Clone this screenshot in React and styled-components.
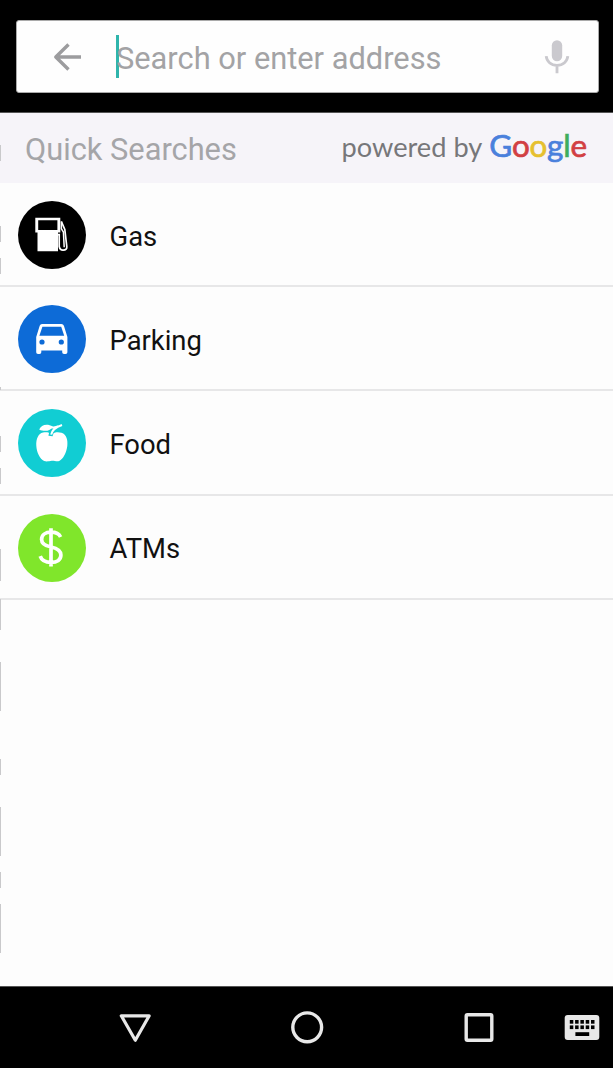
import React from 'react';
import styled, { createGlobalStyle } from 'styled-components';

const GlobalStyle = createGlobalStyle`
  * { box-sizing: border-box; }
  body { margin: 0; background: #fdfdfd; font-family: Roboto, sans-serif; }
`;

const Screen = styled.div`
  position: relative;
  display: flex;
  flex-direction: column;
  width: 613px;
  height: 1068px;
  overflow: hidden;
  background: #fdfdfd;
`;

const TopBar = styled.header`
  flex: none;
  height: 113px;
  padding: 20px 14px 0 16px;
  background: #000;
  border-bottom: 1px solid #555;
`;

const SearchBox = styled.div`
  display: flex;
  align-items: center;
  height: 73px;
  padding: 0 21px 0 30px;
  background: #fefefe;
  border: 1px solid #aaa;
  border-radius: 3px;
`;

const Caret = styled.span`
  flex: none;
  width: 3px;
  height: 43px;
  margin-left: 29px;
  background: #2fb5ac;
`;

const Placeholder = styled.span`
  flex: 1;
  margin-left: -3px;
  padding-top: 4px;
  font-size: 30.8px;
  line-height: 36px;
  color: #a3a3a5;
  white-space: nowrap;
`;

const SectionHeader = styled.div`
  display: flex;
  flex: none;
  align-items: center;
  justify-content: space-between;
  height: 70px;
  padding: 0 26px 0 25px;
  background: #f6f4f9;
`;

const SectionTitle = styled.h1`
  margin: 0;
  padding-top: 4px;
  font-size: 30.8px;
  font-weight: 400;
  line-height: 36px;
  color: #a5a5a8;
`;

const Attribution = styled.div`
  display: flex;
  align-items: baseline;
  gap: 7px;
  padding-bottom: 4px;
  font-family: Lato, sans-serif;
  font-size: 27.2px;
  line-height: 32px;
  color: #77777a;
`;

const Brand = styled.span`
  font-size: 31.4px;
  letter-spacing: -0.15px;
  -webkit-text-stroke: 0.7px;
`;

const Letter = styled.span`
  color: ${(p) => p.$color};
`;

const List = styled.ul`
  flex: 1;
  margin: 0;
  padding: 0;
  list-style: none;
`;

const Row = styled.li`
  display: flex;
  align-items: center;
  height: 104.2px;
  padding: 2px 0 0 18px;
  border-bottom: 2px solid #e7e7e8;
`;

const Badge = styled.span`
  display: flex;
  width: 68px;
  height: 68px;
  border-radius: 50%;
  background: ${(p) => p.$color};
`;

const RowLabel = styled.span`
  margin-left: 23.5px;
  padding-top: 3px;
  font-size: 27.4px;
  line-height: 34px;
  color: #111;
`;

const NavBar = styled.nav`
  display: flex;
  flex: none;
  align-items: center;
  height: 82px;
  padding: 0 0 2px 117px;
  background: #000;
  border-top: 1px solid #555;
`;

const NavIcon = styled.svg`
  flex: none;
  width: 36px;
  height: 36px;
  margin-right: ${(p) => p.$gap || 0}px;
`;

const EdgeTick = styled.i`
  position: absolute;
  left: 0;
  top: ${(p) => p.$top}px;
  width: 1px;
  height: ${(p) => p.$length}px;
  background: #c9c9cb;
`;

const ticks = [
  [145, 16], [226, 16], [258, 16], [387, 3], [436, 16], [468, 16],
  [549, 32], [599, 31], [662, 49], [759, 16], [807, 49], [872, 16], [904, 49],
];

const brandLetters = [
  ['G', '#4a80dc'], ['o', '#d23f43'], ['o', '#e6c02f'],
  ['g', '#4a80dc'], ['l', '#3fae5c'], ['e', '#d23f43'],
];

const BackIcon = () => (
  <svg width="40" height="40" viewBox="0 0 40 40" fill="none" stroke="#9c9c9e" strokeWidth="3.4">
    <path d="M34 20H8.5M21.5 7.5 8.8 20 21.5 32.5" strokeLinejoin="round" />
  </svg>
);

const MicIcon = () => (
  <svg width="40" height="40" viewBox="0 0 40 40" fill="none">
    <rect x="14.8" y="3.3" width="10.4" height="21" rx="5.2" fill="#cac9ce" />
    <path d="M9.2 19.2C9.6 24.3 14 28.4 20 28.4S30.4 24.3 30.8 19.2M20 28.4V36.3" stroke="#cac9ce" strokeWidth="2.8" />
  </svg>
);

const GasIcon = () => (
  <svg width="68" height="68" viewBox="0 0 68 68" fill="none">
    <path fill="#fff" fillRule="evenodd" d="M17.3 16.8H42.3V31.6H40V50.3H19.5V31.6H17.3ZM20.2 19.2V29H39.4V19.2Z" />
    <path d="M39.5 33.6H41.2V45.5Q42 49.4 45.2 49.2Q49.2 49 48.8 45.5L46.8 28.5 43.4 20.5" stroke="#fff" strokeWidth="1.7" />
    <path d="M43.4 20.5V27.8L45.4 31 46.2 46.2" stroke="#fff" strokeWidth="1.5" />
  </svg>
);

const CarIcon = () => (
  <svg width="68" height="68" viewBox="0 0 68 68">
    <path fill="#fff" fillRule="evenodd" d="M24 19H43.5Q45.2 19 45.9 20.7L49.4 32V47.2Q49.4 49 47.6 49H46Q44.2 49 44.2 47.2V45.4H23.3V47.2Q23.3 49 21.5 49H20Q18.2 49 18.2 47.2V32L21.7 20.7Q22.3 19 24 19ZM24.4 21.8 21.4 30.7H46.2L43.2 21.8ZM24 34.4A2.6 2.6 0 1 0 24 39.6A2.6 2.6 0 1 0 24 34.4ZM43.3 34.4A2.6 2.6 0 1 0 43.3 39.6A2.6 2.6 0 1 0 43.3 34.4Z" />
  </svg>
);

const AppleIcon = () => (
  <svg width="68" height="68" viewBox="0 0 68 68" fill="#fff">
    <path d="M33.8 25C36.5 23.2 40 22.6 43.5 23.8C48.7 25.6 50 31.5 49.3 37C48.4 43.8 45.2 50.2 41.2 52C38.8 53 36.6 51.6 33.8 51.8C31 52 29 53.1 26.2 52C21.8 50 18.7 43.4 18.3 36.8C18 29.8 20.3 24.8 25 23.6C28.2 22.8 31.3 23.5 33.8 25Z" />
    <path d="M32.5 27C33 22 37 18.2 43.8 16.5" fill="none" stroke="#11cdd3" strokeWidth="4.2" />
    <path d="M21.2 20.4C23.2 16 28.5 14.2 34.8 17.4C33 21.8 26.5 23.2 21.2 20.4Z" />
    <path d="M33.2 25.6C33.8 21.5 38 18.2 44 16M33 18.2Q37.2 19 40.5 17.2" fill="none" stroke="#fff" strokeWidth="2" />
  </svg>
);

const DollarIcon = () => (
  <svg width="68" height="68" viewBox="0 0 68 68" fill="none" stroke="#fff" strokeWidth="3.7">
    <path d="M42.6 23C41 19.7 37.7 18.2 33.2 18.2C27.3 18.2 23.6 21.2 23.6 25.4C23.6 30.2 27.7 31.9 33.1 33C39 34.3 42.9 36.3 42.9 41C42.9 45.7 39.2 48.4 33.1 48.4C27.6 48.4 23.6 46.3 22.2 42.1M33 14.2V52.4" />
  </svg>
);

const categories = [
  { label: 'Gas', color: '#000', Icon: GasIcon },
  { label: 'Parking', color: '#0d6bd7', Icon: CarIcon },
  { label: 'Food', color: '#11cdd3', Icon: AppleIcon },
  { label: 'ATMs', color: '#80e62b', Icon: DollarIcon },
];

const keyColumns = [0, 1, 2, 3, 4];

export default function App() {
  return (
    <>
      <GlobalStyle />
      <Screen>
        <TopBar>
          <SearchBox>
            <BackIcon />
            <Caret />
            <Placeholder>Search or enter address</Placeholder>
            <MicIcon />
          </SearchBox>
        </TopBar>
        <SectionHeader>
          <SectionTitle>Quick Searches</SectionTitle>
          <Attribution>
            <span>powered by</span>
            <Brand>
              {brandLetters.map(([char, color], i) => (
                <Letter key={i} $color={color}>{char}</Letter>
              ))}
            </Brand>
          </Attribution>
        </SectionHeader>
        <List>
          {categories.map(({ label, color, Icon }) => (
            <Row key={label}>
              <Badge $color={color}><Icon /></Badge>
              <RowLabel>{label}</RowLabel>
            </Row>
          ))}
        </List>
        <NavBar>
          <NavIcon $gap={136} viewBox="0 0 36 36" fill="none" stroke="#e8e8e8" strokeWidth="3.2" strokeLinejoin="round">
            <path d="M4.3 6.8H32.2L18.3 31.2Z" />
          </NavIcon>
          <NavIcon $gap={136} viewBox="0 0 36 36" fill="none" stroke="#e8e8e8" strokeWidth="3.4">
            <circle cx="18.2" cy="18.3" r="14.4" />
          </NavIcon>
          <NavIcon $gap={67} viewBox="0 0 36 36" fill="none" stroke="#e8e8e8" strokeWidth="3.4">
            <rect x="5.2" y="5.7" width="25.6" height="25.6" rx="1.2" />
          </NavIcon>
          <NavIcon viewBox="0 0 36 36">
            <rect x="0.7" y="6" width="34.6" height="25" rx="3" fill="#e8e8e8" />
            {keyColumns.map((c) => (
              <g key={c} fill="#000">
                <rect x={5.8 + c * 5.3} y="11" width="3.5" height="3.7" />
                <rect x={5.8 + c * 5.3} y="16.4" width="3.5" height="3.7" />
              </g>
            ))}
            <rect x="11.4" y="23.2" width="13.8" height="3.8" fill="#000" />
          </NavIcon>
        </NavBar>
        {ticks.map(([top, length]) => (
          <EdgeTick key={top} $top={top} $length={length} />
        ))}
      </Screen>
    </>
  );
}
